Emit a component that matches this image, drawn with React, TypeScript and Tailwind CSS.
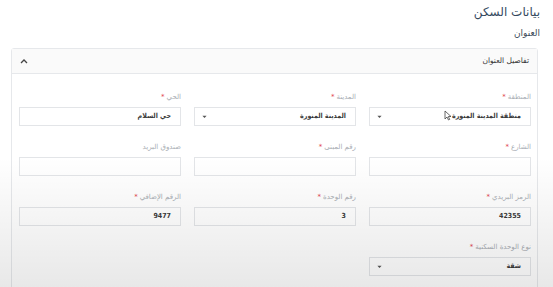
import React from 'react';

type Field = {
  label: string;
  value?: string;
  required?: boolean;
  select?: boolean;
};

const rows: Field[][] = [
  [
    { label: 'المنطقة', value: 'منطقة المدينة المنورة', required: true, select: true },
    { label: 'المدينة', value: 'المدينة المنورة', required: true, select: true },
    { label: 'الحي', value: 'حي السلام', required: true },
  ],
  [
    { label: 'الشارع', required: true },
    { label: 'رقم المبنى', required: true },
    { label: 'صندوق البريد' },
  ],
  [
    { label: 'الرمز البريدي', value: '42355', required: true },
    { label: 'رقم الوحدة', value: '3', required: true },
    { label: 'الرقم الإضافي', value: '9477', required: true },
  ],
  [{ label: 'نوع الوحدة السكنية', value: 'شقة', required: true, select: true }],
];

function FormField({ field }: { field: Field }) {
  return (
    <div className="flex flex-col">
      <div className="h-[10px] text-[7px] leading-[10px] text-[#a8adb3]">
        {field.label}
        {field.required && <span className="text-[#e0434b] mr-[2px]">*</span>}
      </div>
      <div className="mt-[5px] h-[19px] border border-[#e3e5e8] bg-white flex items-center justify-between pr-[9px] pl-[7px]">
        <span
          className="text-[7px] font-bold text-[#3a3a3a]"
          style={{ fontFamily: '"DejaVu Sans Condensed", "DejaVu Sans", sans-serif' }}
        >
          {field.value}
        </span>
        {field.select && (
          <svg width="5" height="4" viewBox="0 0 6 4">
            <path d="M0.5 0.5 L3 3.2 L5.5 0.5 Z" fill="#555" />
          </svg>
        )}
      </div>
    </div>
  );
}

export default function App() {
  return (
    <div
      dir="rtl"
      className="relative w-[553px] h-[287px] overflow-hidden bg-white"
      style={{ fontFamily: '"DejaVu Sans", sans-serif' }}
    >
      <div className="pr-[13px] pl-[11px] pt-[3px]">
        <h1 className="text-[12px] leading-[18px] text-[#34495e]">بيانات السكن</h1>
        <h2 className="mt-[6px] text-[9px] leading-[13px] text-[#3d4b5a]">العنوان</h2>

        <div className="mt-[8px] mr-[2px] border border-[#e6e8eb] rounded-[3px]">
          <div className="h-[25px] bg-[#fafafa] border-b border-[#e6e8eb] flex items-center justify-between pr-[8px] pl-[8px]">
            <span className="text-[7.5px] text-[#333]">تفاصيل العنوان</span>
            <svg width="8" height="5" viewBox="0 0 8 5">
              <path d="M1 4 L4 1 L7 4" fill="none" stroke="#444" strokeWidth="1.3" />
            </svg>
          </div>
          <div className="pt-[18px] pr-[6px] pl-[7px] pb-[20px] flex flex-col gap-[16px]">
            {rows.map((row, i) => (
              <div key={i} className="grid grid-cols-3 gap-x-[13px]">
                {row.map((f) => (
                  <FormField key={f.label} field={f} />
                ))}
              </div>
            ))}
          </div>
        </div>
      </div>

      {/* mouse cursor */}
      <svg
        className="absolute left-[444px] top-[110px]"
        width="8"
        height="11"
        viewBox="0 0 8 11"
      >
        <path d="M1 1 L1 9 L3 7 L4.5 10 L5.7 9.4 L4.3 6.5 L7 6.5 Z" fill="#fff" stroke="#444" strokeWidth="0.8" />
      </svg>

      {/* screen capture shading */}
      <div className="pointer-events-none absolute inset-x-0 bottom-0 h-[130px] bg-gradient-to-b from-transparent to-black/[0.09]" />
    </div>
  );
}
